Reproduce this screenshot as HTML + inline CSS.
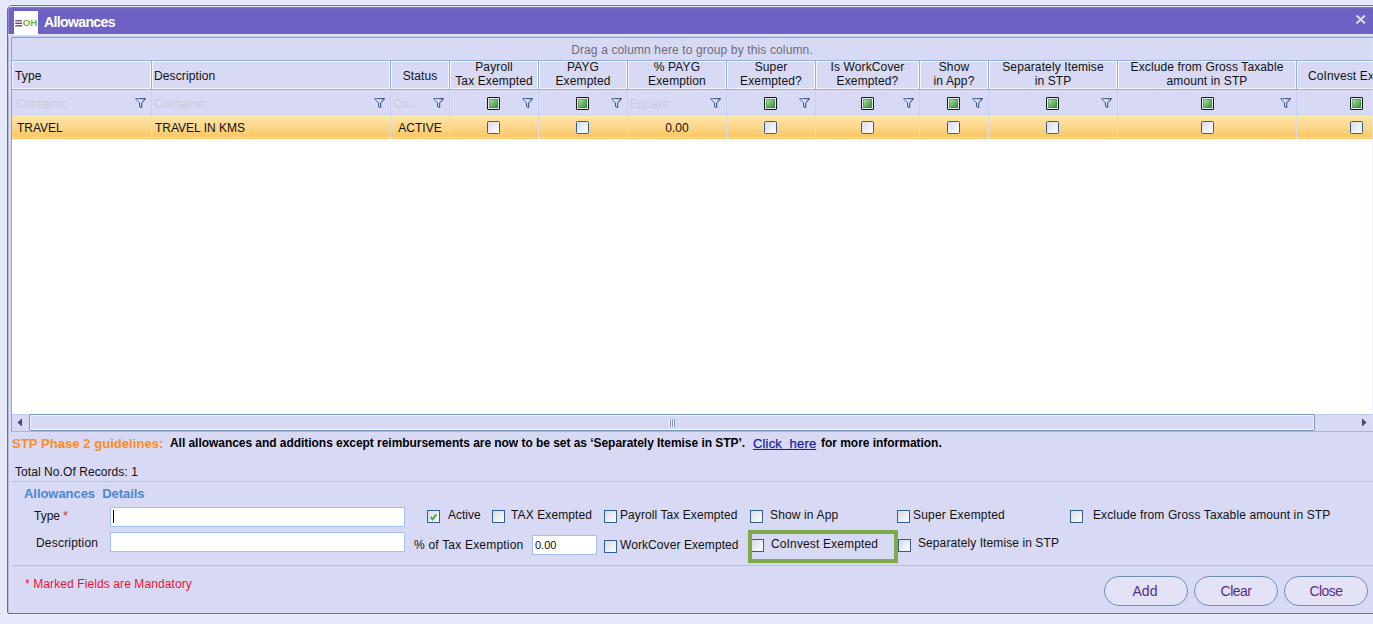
<!DOCTYPE html>
<html><head><meta charset="utf-8"><title>Allowances</title>
<style>
html,body{margin:0;padding:0;}
body{width:1373px;height:624px;overflow:hidden;background:#e4e8fa;font-family:"Liberation Sans",sans-serif;font-size:12px;color:#111;position:relative;}
div,span{box-sizing:border-box;}
#win{position:absolute;left:7px;top:5px;width:1380px;height:609px;background:#d8daf5;border:1px solid #55729f;border-radius:5px 0 0 2px;box-shadow:0 0 0 1px #eceffc, inset 1px 0 0 #b4b9de, inset 2px 0 0 #dddff8, inset 0 -1px 0 #dfe0f8;}
#title{position:absolute;left:8px;top:6px;width:1370px;height:28px;background:linear-gradient(#7d74ce 0,#6d62c4 2px);border-radius:4px 0 0 0;border-top:1px solid #f0f0fd;border-left:1px solid #8f88d6;}
#title .t{position:absolute;left:35px;top:7px;font-weight:bold;font-size:14px;color:#fff;line-height:16px;letter-spacing:-0.62px;}
#tl1{position:absolute;left:8px;top:34px;width:1370px;height:1px;background:#ebe8fa;}
#tl2{position:absolute;left:8px;top:35px;width:1370px;height:2px;background:linear-gradient(#d0defa 0,#d0defa 1px,#bdd3f7 1px);}
#icon{position:absolute;left:14px;top:11px;width:24px;height:24px;background:#fff;}
#grid{position:absolute;left:11px;top:37px;width:1370px;height:395px;border:1px solid #86a9dc;border-bottom-color:#9bb8e6;background:#fff;}
#grp{position:absolute;left:12px;top:38px;width:1361px;height:22px;background:#d8daf5;color:#6c6c7a;text-align:center;line-height:25px;letter-spacing:0.13px;padding-right:1px;}
.hdr{position:absolute;top:60px;height:30px;background:#d8daf5;border:0 solid #8eafe0;border-width:1px 1px 1px 0;text-align:center;line-height:14px;white-space:nowrap;box-shadow:inset 1px 1px 0 #f6f7fe, inset -1px -1px 0 #f6f7fe;}
.hdr span{position:absolute;left:0;right:0;top:-1px;letter-spacing:0.12px;}
.hdr.s span{top:8px;}
.hdr.l span{left:3px;text-align:left;}
.flt{position:absolute;top:90px;height:26px;background:#d8daf5;border-right:1px solid #c4d2f1;}
.flt .ph{position:absolute;left:4px;top:7px;color:#c9cbd9;line-height:14px;}
.cell{position:absolute;top:116px;height:23px;border-right:1px solid #d9dde6;line-height:25px;text-align:center;}
#row{position:absolute;left:12px;top:116px;width:1361px;height:23px;background:linear-gradient(#fdf0a8 0,#fdf0a8 1px,#fee3a4 1px,#fdd78c 11px,#fbc762 21px,#ffe190 21px,#ffe190 22px,#fcc274 22px,#fcc274 23px);}
.cb{position:absolute;width:13px;height:13px;border:1px solid #2f6199;border-radius:1.5px;background:linear-gradient(135deg,#d8dbe8,#ffffff);}
.gcb{position:absolute;width:13px;height:13px;border:1px solid #151515;border-radius:1px;background:#e9ece6;}
.gcb i{position:absolute;left:1px;top:1px;width:9px;height:9px;background:linear-gradient(135deg,#bfe2bc 0,#72bb72 45%,#348f3c 100%);box-shadow:inset 0 0 0 1px rgba(45,125,55,0.45);}
svg.fn{position:absolute;width:11px;height:10px;}
#sb{position:absolute;left:12px;top:414px;width:1361px;height:17px;background:#d8daf5;border-top:1px solid #bccbee;}
#redge{position:absolute;left:1372px;top:38px;width:1px;height:393px;background:rgba(222,230,248,0.55);}
#thumb{position:absolute;left:29px;top:414px;width:1286px;height:17px;border:1px solid #7b98c4;border-radius:2px;background:#d8daf5;box-shadow:inset 0 0 0 1px #f5f6fe;}
.line{position:absolute;left:12px;width:1361px;height:1px;background:#a9c4ea;}
.t{position:absolute;white-space:nowrap;line-height:14px;}
.inp{position:absolute;background:#fff;border:1px solid #a3c1ec;}
.fcb{position:absolute;width:13px;height:13px;border:1px solid #2f5f94;background:linear-gradient(135deg,#d6dae6,#ffffff);}
.btn{position:absolute;top:576px;height:30px;border:1px solid #6d8fb5;border-radius:15px;background:#e4e2f7;color:#552d88;font-size:14px;text-align:center;line-height:28px;}
</style></head><body>
<div id="win"></div>
<div id="title"><div class="t">Allowances</div></div>
<div id="tl1"></div><div id="tl2"></div>
<div id="icon"><svg width="24" height="24" viewBox="0 0 24 24"><g fill="#5e2d6e"><rect x="1.2" y="9.2" width="6.8" height="1.2"/><rect x="1.2" y="11.7" width="6.8" height="1.2"/><rect x="1.2" y="14.2" width="6.8" height="1.2"/></g><text x="8.7" y="15.3" font-family="Liberation Sans, sans-serif" font-weight="bold" font-size="8.8" fill="#6db33f" textLength="14.6" lengthAdjust="spacingAndGlyphs">OH</text></svg></div>
<svg style="position:absolute;left:1355px;top:14px" width="12" height="11" viewBox="0 0 12 11"><path d="M1.5 2.2 L10 10.2 M10 2.2 L1.5 10.2" stroke="#4a4590" stroke-width="2" fill="none" opacity="0.6"/><path d="M1.5 1.5 L10 9.5 M10 1.5 L1.5 9.5" stroke="#d5dfee" stroke-width="2.1" fill="none"/></svg>
<svg width="0" height="0" style="position:absolute"><defs><linearGradient id="fs" x1="0" y1="0" x2="1" y2="0"><stop offset="0" stop-color="#4a6ea8"/><stop offset="1" stop-color="#1a2b58"/></linearGradient><linearGradient id="ff" x1="0" y1="0" x2="1" y2="0"><stop offset="0" stop-color="#eef6fe"/><stop offset="1" stop-color="#b4d1f4"/></linearGradient></defs></svg>
<div id="grid"></div>
<div id="grp">Drag a column here to group by this column.</div>
<div id="row"></div>
<div class="hdr s l" style="left:12px;width:140px"><span>Type</span></div>
<div class="flt" style="left:12px;width:140px"><span class="ph" style="left:4px">Contains:</span></div>
<svg class="fn" style="left:135px;top:98px" viewBox="0 0 11 10"><path d="M0.5 0.7 H10.6 L6.7 4.9 V9.6 L4.5 8.6 V4.9 Z" fill="url(#ff)" stroke="url(#fs)" stroke-width="1" stroke-linejoin="round"/><path d="M0 0.6 H11" stroke="url(#fs)" stroke-width="1.2"/></svg>
<div class="cell" style="left:12px;width:140px"><span style="position:absolute;left:5px">TRAVEL</span></div>
<div class="hdr s l" style="left:152px;width:239px"><span style="left:2px">Description</span></div>
<div class="flt" style="left:152px;width:239px"><span class="ph" style="left:2px">Contains:</span></div>
<svg class="fn" style="left:374px;top:98px" viewBox="0 0 11 10"><path d="M0.5 0.7 H10.6 L6.7 4.9 V9.6 L4.5 8.6 V4.9 Z" fill="url(#ff)" stroke="url(#fs)" stroke-width="1" stroke-linejoin="round"/><path d="M0 0.6 H11" stroke="url(#fs)" stroke-width="1.2"/></svg>
<div class="cell" style="left:152px;width:239px"><span style="position:absolute;left:3px">TRAVEL IN KMS</span></div>
<div class="hdr s" style="left:391px;width:59px"><span>Status</span></div>
<div class="flt" style="left:391px;width:59px"><span class="ph" style="left:2px">Co...</span></div>
<svg class="fn" style="left:433px;top:98px" viewBox="0 0 11 10"><path d="M0.5 0.7 H10.6 L6.7 4.9 V9.6 L4.5 8.6 V4.9 Z" fill="url(#ff)" stroke="url(#fs)" stroke-width="1" stroke-linejoin="round"/><path d="M0 0.6 H11" stroke="url(#fs)" stroke-width="1.2"/></svg>
<div class="cell" style="left:391px;width:59px">ACTIVE</div>
<div class="hdr" style="left:450px;width:89px"><span>Payroll<br>Tax Exempted</span></div>
<div class="flt" style="left:450px;width:89px"></div>
<svg class="fn" style="left:522px;top:98px" viewBox="0 0 11 10"><path d="M0.5 0.7 H10.6 L6.7 4.9 V9.6 L4.5 8.6 V4.9 Z" fill="url(#ff)" stroke="url(#fs)" stroke-width="1" stroke-linejoin="round"/><path d="M0 0.6 H11" stroke="url(#fs)" stroke-width="1.2"/></svg>
<div class="gcb" style="left:487px;top:97px"><i></i></div>
<div class="cell" style="left:450px;width:89px"></div>
<div class="cb" style="left:487px;top:121px"></div>
<div class="hdr" style="left:539px;width:89px"><span>PAYG<br>Exempted</span></div>
<div class="flt" style="left:539px;width:89px"></div>
<svg class="fn" style="left:611px;top:98px" viewBox="0 0 11 10"><path d="M0.5 0.7 H10.6 L6.7 4.9 V9.6 L4.5 8.6 V4.9 Z" fill="url(#ff)" stroke="url(#fs)" stroke-width="1" stroke-linejoin="round"/><path d="M0 0.6 H11" stroke="url(#fs)" stroke-width="1.2"/></svg>
<div class="gcb" style="left:576px;top:97px"><i></i></div>
<div class="cell" style="left:539px;width:89px"></div>
<div class="cb" style="left:576px;top:121px"></div>
<div class="hdr" style="left:628px;width:99px"><span>% PAYG<br>Exemption</span></div>
<div class="flt" style="left:628px;width:99px"><span class="ph" style="left:2px">Equals:</span></div>
<svg class="fn" style="left:710px;top:98px" viewBox="0 0 11 10"><path d="M0.5 0.7 H10.6 L6.7 4.9 V9.6 L4.5 8.6 V4.9 Z" fill="url(#ff)" stroke="url(#fs)" stroke-width="1" stroke-linejoin="round"/><path d="M0 0.6 H11" stroke="url(#fs)" stroke-width="1.2"/></svg>
<div class="cell" style="left:628px;width:99px">0.00</div>
<div class="hdr" style="left:727px;width:89px"><span>Super<br>Exempted?</span></div>
<div class="flt" style="left:727px;width:89px"></div>
<svg class="fn" style="left:799px;top:98px" viewBox="0 0 11 10"><path d="M0.5 0.7 H10.6 L6.7 4.9 V9.6 L4.5 8.6 V4.9 Z" fill="url(#ff)" stroke="url(#fs)" stroke-width="1" stroke-linejoin="round"/><path d="M0 0.6 H11" stroke="url(#fs)" stroke-width="1.2"/></svg>
<div class="gcb" style="left:764px;top:97px"><i></i></div>
<div class="cell" style="left:727px;width:89px"></div>
<div class="cb" style="left:764px;top:121px"></div>
<div class="hdr" style="left:816px;width:104px"><span>Is WorkCover<br>Exempted?</span></div>
<div class="flt" style="left:816px;width:104px"></div>
<svg class="fn" style="left:903px;top:98px" viewBox="0 0 11 10"><path d="M0.5 0.7 H10.6 L6.7 4.9 V9.6 L4.5 8.6 V4.9 Z" fill="url(#ff)" stroke="url(#fs)" stroke-width="1" stroke-linejoin="round"/><path d="M0 0.6 H11" stroke="url(#fs)" stroke-width="1.2"/></svg>
<div class="gcb" style="left:861px;top:97px"><i></i></div>
<div class="cell" style="left:816px;width:104px"></div>
<div class="cb" style="left:861px;top:121px"></div>
<div class="hdr" style="left:920px;width:69px"><span>Show<br>in App?</span></div>
<div class="flt" style="left:920px;width:69px"></div>
<svg class="fn" style="left:972px;top:98px" viewBox="0 0 11 10"><path d="M0.5 0.7 H10.6 L6.7 4.9 V9.6 L4.5 8.6 V4.9 Z" fill="url(#ff)" stroke="url(#fs)" stroke-width="1" stroke-linejoin="round"/><path d="M0 0.6 H11" stroke="url(#fs)" stroke-width="1.2"/></svg>
<div class="gcb" style="left:947px;top:97px"><i></i></div>
<div class="cell" style="left:920px;width:69px"></div>
<div class="cb" style="left:947px;top:121px"></div>
<div class="hdr" style="left:989px;width:129px"><span>Separately Itemise<br>in STP</span></div>
<div class="flt" style="left:989px;width:129px"></div>
<svg class="fn" style="left:1101px;top:98px" viewBox="0 0 11 10"><path d="M0.5 0.7 H10.6 L6.7 4.9 V9.6 L4.5 8.6 V4.9 Z" fill="url(#ff)" stroke="url(#fs)" stroke-width="1" stroke-linejoin="round"/><path d="M0 0.6 H11" stroke="url(#fs)" stroke-width="1.2"/></svg>
<div class="gcb" style="left:1046px;top:97px"><i></i></div>
<div class="cell" style="left:989px;width:129px"></div>
<div class="cb" style="left:1046px;top:121px"></div>
<div class="hdr" style="left:1118px;width:179px"><span>Exclude from Gross Taxable<br>amount in STP</span></div>
<div class="flt" style="left:1118px;width:179px"></div>
<svg class="fn" style="left:1280px;top:98px" viewBox="0 0 11 10"><path d="M0.5 0.7 H10.6 L6.7 4.9 V9.6 L4.5 8.6 V4.9 Z" fill="url(#ff)" stroke="url(#fs)" stroke-width="1" stroke-linejoin="round"/><path d="M0 0.6 H11" stroke="url(#fs)" stroke-width="1.2"/></svg>
<div class="gcb" style="left:1201px;top:97px"><i></i></div>
<div class="cell" style="left:1118px;width:179px"></div>
<div class="cb" style="left:1201px;top:121px"></div>
<div class="hdr s" style="left:1297px;width:120px"><span style="left:11px;text-align:left">CoInvest Exempted</span></div>
<div class="flt" style="left:1297px;width:120px"></div>
<div class="gcb" style="left:1350px;top:97px"><i></i></div>
<div class="cell" style="left:1297px;width:120px"></div>
<div class="cb" style="left:1350px;top:121px"></div>
<div id="sb"></div><div id="redge"></div><div id="thumb"></div>
<svg style="position:absolute;left:17px;top:418px" width="6" height="9" viewBox="0 0 6 9"><path d="M5 0.5 V8.5 L0.5 4.5 Z" fill="#3c4868"/></svg>
<svg style="position:absolute;left:1361px;top:418px" width="6" height="9" viewBox="0 0 6 9"><path d="M1 0.5 V8.5 L5.5 4.5 Z" fill="#3c4868"/></svg>
<div style="position:absolute;left:669px;top:419px;width:6px;height:8px;background:linear-gradient(90deg,#f0f2fd 0,#f0f2fd 1px,#7f99c5 1px,#7f99c5 2px,#f0f2fd 2px,#f0f2fd 3px,#7f99c5 3px,#7f99c5 4px,#f0f2fd 4px,#f0f2fd 5px,#7f99c5 5px,#7f99c5 6px)"></div>

<div class="t" style="left:12px;top:436px;font-weight:bold;font-size:13px;color:#ff8a22;line-height:16px;letter-spacing:0.06px">STP Phase 2 guidelines:</div>
<div class="t" style="left:170px;top:435px;font-weight:bold;color:#000;line-height:16px;letter-spacing:-0.045px">All allowances and additions except reimbursements are now to be set as ‘Separately Itemise in STP’.</div>
<div class="t" style="left:753px;top:436px;font-size:13px;color:#1c1ca4;line-height:16px;text-decoration:underline;white-space:pre;letter-spacing:0.17px;-webkit-text-stroke:0.25px #1c1ca4">Click  here</div>
<div class="t" style="left:821px;top:435px;font-weight:bold;color:#000;line-height:16px;letter-spacing:-0.03px">for more information.</div>
<div class="t" style="left:15px;top:465px;letter-spacing:0.07px">Total No.Of Records: 1</div>
<div class="line" style="top:481px"></div>
<div class="t" style="left:24px;top:486px;font-weight:bold;font-size:13px;color:#4a86d0;line-height:16px;letter-spacing:-0.05px">Allowances&nbsp; Details</div>
<div class="t" style="left:34px;top:509px">Type <span style="color:#e02020">*</span></div>
<div class="inp" style="left:110px;top:507px;width:295px;height:20px"></div>
<div style="position:absolute;left:113px;top:510px;width:1px;height:13px;background:#000"></div>
<div class="t" style="left:36px;top:536px;letter-spacing:0.2px">Description</div>
<div class="inp" style="left:110px;top:532px;width:295px;height:20px"></div>

<div class="fcb" style="left:427px;top:510px"><svg width="11" height="11" viewBox="0 0 11 11" style="position:absolute;left:0;top:0"><path d="M2.6 6 L4.6 8.3 L8.4 3.4" stroke="#45b441" stroke-width="2.1" fill="none"/></svg></div>
<div class="t" style="left:448px;top:508px">Active</div>
<div class="fcb" style="left:492px;top:510px"></div>
<div class="t" style="left:511px;top:508px;letter-spacing:0.1px">TAX Exempted</div>
<div class="fcb" style="left:604px;top:510px"></div>
<div class="t" style="left:620px;top:508px;letter-spacing:0.08px">Payroll Tax Exempted</div>
<div class="fcb" style="left:750px;top:510px"></div>
<div class="t" style="left:770px;top:508px;letter-spacing:0.14px">Show in App</div>
<div class="fcb" style="left:897px;top:510px"></div>
<div class="t" style="left:913px;top:508px;letter-spacing:0.18px">Super Exempted</div>
<div class="fcb" style="left:1070px;top:510px"></div>
<div class="t" style="left:1093px;top:508px;letter-spacing:0.12px">Exclude from Gross Taxable amount in STP</div>

<div class="t" style="left:414px;top:538px;letter-spacing:0.2px">% of Tax Exemption</div>
<div class="inp" style="left:532px;top:535px;width:65px;height:20px"></div>
<div class="t" style="left:535px;top:538px;font-size:11px">0.00</div>
<div class="fcb" style="left:604px;top:540px"></div>
<div class="t" style="left:620px;top:538px;letter-spacing:0.08px">WorkCover Exempted</div>
<div class="fcb" style="left:751px;top:539px"></div>
<div class="t" style="left:771px;top:537px;letter-spacing:0.14px">CoInvest Exempted</div>
<div style="position:absolute;left:748px;top:530px;width:150px;height:33px;border:4px solid #7faa4c"></div>
<div class="fcb" style="left:898px;top:539px"></div>
<div class="t" style="left:918px;top:536px;letter-spacing:0.09px">Separately Itemise in STP</div>

<div class="line" style="top:565px"></div>
<div class="t" style="left:25px;top:577px;color:#ee1230;letter-spacing:0.1px">* Marked Fields are Mandatory</div>
<div class="btn" style="left:1104px;width:84px;padding-right:2px">Add</div>
<div class="btn" style="left:1194px;width:84px;letter-spacing:-0.5px">Clear</div>
<div class="btn" style="left:1284px;width:84px;letter-spacing:-0.55px">Close</div>
</body></html>
